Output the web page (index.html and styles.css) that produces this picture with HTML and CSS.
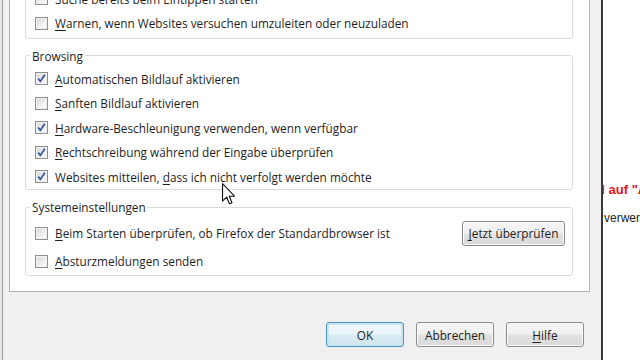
FILE: index.html
```
<!DOCTYPE html>
<html lang="de">
<head>
  <meta charset="UTF-8" />
  <title>Einstellungen – Erweitert</title>
  <link rel="stylesheet" href="styles.css">
</head>
<body>

  <div class="edge"></div>

  <div class="dialog">
    <div class="panel">

      <div class="group group-top">
        <div class="row"><span class="cb"></span><span class="label">Suche bereits beim Eintippen starten</span></div>
        <div class="row"><span class="cb"></span><span class="label"><u>W</u>arnen, wenn Websites versuchen umzuleiten oder neuzuladen</span></div>
      </div>

      <fieldset class="group group-browse">
        <legend>Browsing</legend>
        <div class="row"><span class="cb checked"><svg viewBox="0 0 11 11"><path d="M2.2 5.6 L4.3 8.4 L8.8 1.8" /></svg></span><span class="label"><u>A</u>utomatischen Bildlauf aktivieren</span></div>
        <div class="row"><span class="cb"></span><span class="label"><u>S</u>anften Bildlauf aktivieren</span></div>
        <div class="row"><span class="cb checked"><svg viewBox="0 0 11 11"><path d="M2.2 5.6 L4.3 8.4 L8.8 1.8" /></svg></span><span class="label"><u>H</u>ardware-Beschleunigung verwenden, wenn verfügbar</span></div>
        <div class="row"><span class="cb checked"><svg viewBox="0 0 11 11"><path d="M2.2 5.6 L4.3 8.4 L8.8 1.8" /></svg></span><span class="label"><u>R</u>echtschreibung während der Eingabe überprüfen</span></div>
        <div class="row"><span class="cb checked"><svg viewBox="0 0 11 11"><path d="M2.2 5.6 L4.3 8.4 L8.8 1.8" /></svg></span><span class="label">Websites mitteilen, <u>d</u>ass ich nicht verfolgt werden möchte</span></div>
      </fieldset>

      <fieldset class="group group-system">
        <legend>Systemeinstellungen</legend>
        <div class="row row-button">
          <span class="cb"></span><span class="label"><u>B</u>eim Starten überprüfen, ob Firefox der Standardbrowser ist</span>
          <button class="btn btn-check"><u>J</u>etzt überprüfen</button>
        </div>
        <div class="row"><span class="cb"></span><span class="label"><u>A</u>bsturzmeldungen senden</span></div>
      </fieldset>

    </div>

    <div class="actions">
      <button class="btn btn-default">OK</button>
      <button class="btn">Abbrechen</button>
      <button class="btn"><u>H</u>ilfe</button>
    </div>
  </div>

  <div class="backdrop">
    <p class="hint">d auf "Anwenden" klicken</p>
    <p class="text">verwenden</p>
  </div>

  <!-- mouse pointer over the dialog -->
  <svg class="pointer" viewBox="0 0 12 20" width="13" height="22">
    <path d="M0.5 0.5 L0.5 16.5 L4.3 12.8 L6.9 19 L9.2 18 L6.7 12 L11.5 12 Z" />
  </svg>

</body>
</html>
```

FILE: styles.css
```
* {
  margin: 0;
  padding: 0;
  box-sizing: border-box;
}

body {
  position: relative;
  display: flex;
  width: 640px;
  height: 360px;
  overflow: hidden;
  background: #fff;
  font-family: "Segoe UI", "Open Sans", "Noto Sans", sans-serif;
  font-size: 11.8px;
  color: #1e1e1e;
}

u {
  text-decoration: underline;
  text-underline-offset: 2px;
}

.edge {
  width: 2px;
  flex: none;
  background: #e6e6e6;
}

.dialog {
  width: 601px;
  flex: none;
  background: #f0f0f0;
  border-left: 1px solid #9a9a9a;
  border-right: 2px solid #3a3a3a;
  padding: 0 11px 0 6px;
}

.panel {
  margin-top: -34.5px;
  background: #fff;
  border: 1px solid #b4b4b4;
  padding: 15px 16px 15px 15px;
}

.group {
  border: 1px solid #dadada;
  border-radius: 3px;
  min-width: 0;
}

.group-top {
  padding: 4px 0 2px;
}

fieldset.group-browse {
  margin-top: 9px;
  padding: 3px 0 0;
}

fieldset.group-system {
  margin-top: 9px;
  padding: 4px 0 1px;
}

legend {
  margin-left: 4px;
  padding: 0 2px;
  line-height: 16px;
  color: #1e1e1e;
}

.row {
  display: flex;
  align-items: center;
  gap: 7px;
  height: 24.5px;
  padding-left: 9px;
  white-space: nowrap;
}

.row-button {
  height: 28px;
  padding-right: 7px;
  margin-bottom: 2px;
}

.row-button .label {
  flex: 1;
}

.cb {
  width: 13px;
  height: 13px;
  flex: none;
  border: 1px solid #8f8f8f;
  background: linear-gradient(135deg, #d6d6d6, #f8f8f8 80%);
  box-shadow: inset 0 0 0 1px #f2f2f2;
}

.cb svg {
  display: block;
  width: 11px;
  height: 11px;
}

.cb svg path {
  fill: none;
  stroke: #2f4f9a;
  stroke-width: 1.7;
}

.btn {
  height: 25px;
  width: 78px;
  border: 1px solid #8a8a8a;
  border-radius: 3px;
  background: linear-gradient(#f6f6f6 0%, #efefef 48%, #e2e2e2 52%, #d9d9d9 100%);
  box-shadow: inset 0 0 0 1px #fbfbfb;
  font: inherit;
  color: #1e1e1e;
}

.btn-check {
  width: 103px;
}

.btn-default {
  border-color: #4e93bd;
  background: linear-gradient(#f3f9fc 0%, #e8f3f8 48%, #d9ebf3 52%, #cfe4ee 100%);
  box-shadow: inset 0 0 0 2px #c4e6f6;
}

.actions {
  display: flex;
  justify-content: flex-end;
  gap: 12px;
  margin-top: 30.5px;
  padding-right: 6px;
}

.backdrop {
  flex: 1;
  overflow: hidden;
  padding-top: 182px;
  font-family: "Liberation Sans", Arial, sans-serif;
  white-space: nowrap;
}

.hint {
  margin-left: -6px;
  font-size: 13px;
  font-weight: bold;
  line-height: 16px;
  color: #e3141b;
}

.text {
  margin-top: 12px;
  margin-left: 1px;
  font-size: 12px;
  line-height: 16px;
  color: #222;
}

.pointer {
  position: absolute;
  left: 222px;
  top: 183px;
}

.pointer path {
  fill: #fff;
  stroke: #111;
  stroke-width: 1;
  stroke-linejoin: round;
}
```
